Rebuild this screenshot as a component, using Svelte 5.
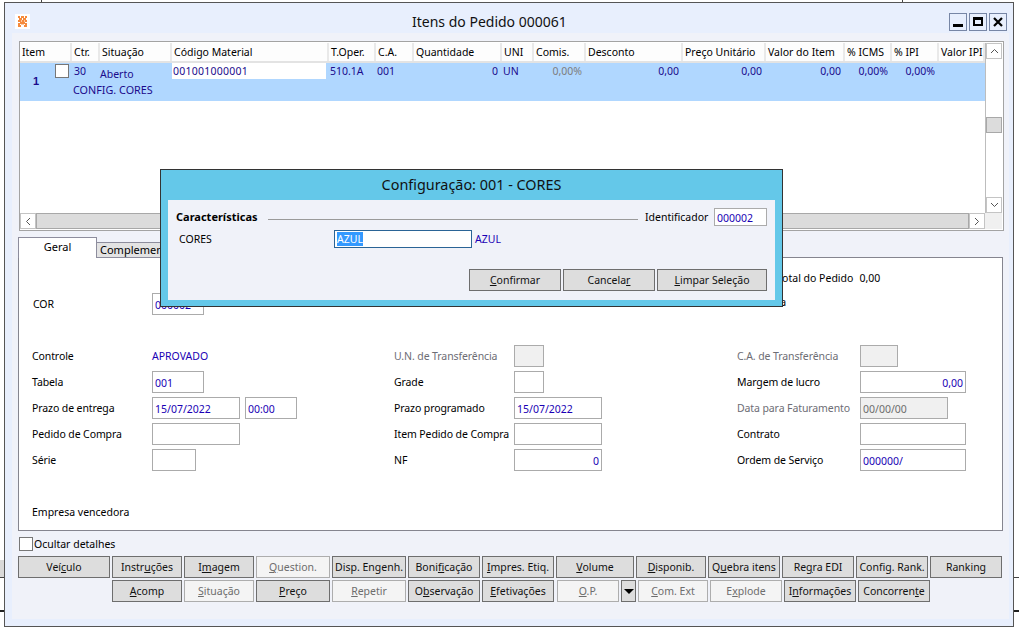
<script>
  const cols = [
    ['Item', 52], ['Ctr.', 28], ['Situação', 72], ['Código Material', 157], ['T.Oper.', 47],
    ['C.A.', 38], ['Quantidade', 88], ['UNI', 32], ['Comis.', 52], ['Desconto', 97],
    ['Preço Unitário', 83], ['Valor do Item', 79], ['% ICMS', 47], ['% IPI', 47], ['Valor IPI', 46]
  ];
  const template = cols.map((c) => c[1] + 'px').join(' ');

  const row1 = [
    ['Veí&culo', 92], ['Instr&uções', 70], ['I&magem', 70], ['&Question.', 74, true],
    ['Disp. Engenh.', 74], ['Boni&ficação', 72], ['&Impres. Etiq.', 72], ['&Volume', 78],
    ['&Disponib.', 70], ['Q&uebra itens', 72], ['Re&gra EDI', 72], ['Config. Rank.', 72], ['Ranking', 72]
  ];
  const row2a = [
    ['&Acomp', 70], ['&Situação', 70, true], ['&Preço', 74], ['&Repetir', 74, true],
    ['O&bservação', 72], ['&Efetivações', 72]
  ];
  const row2b = [
    ['&Com. Ext', 70, true], ['E&xplode', 72, true], ['I&nformações', 72], ['Concorren&te', 72]
  ];
  const dialogButtons = [['&Confirmar', 92], ['Cancela&r', 92], ['&Limpar Seleção', 110]];

  function parts(s) {
    const i = s.indexOf('&');
    if (i < 0) return [s, '', ''];
    return [s.slice(0, i), s.charAt(i + 1), s.slice(i + 2)];
  }
</script>

{#snippet btn(b)}
  {@const p = parts(b[0])}
  <button class="btn" class:off={b[2]} style="width:{b[1]}px">{p[0]}<u>{p[1]}</u>{p[2]}</button>
{/snippet}

<div class="desk">
  <i class="bg v1"></i><i class="bg v2"></i><i class="bg h1"></i><i class="bg h2"></i><i class="bg h3"></i><i class="bg h4"></i><i class="bg h5"></i>

  <section class="window">
    <header class="titlebar">
      <svg class="logo" width="15" height="15" viewBox="0 0 15 15">
        <rect width="15" height="15" fill="#fff"/>
        <path d="M3 2h2v2H3zM6 2h3v2H6zM10 2h2v2h-2zM4 4h3v2H4zM8 4h3v2H8zM3 6h3v2H3zM7 6h2v2H7zM10 6h2v2h-2zM5 8h5v2H5zM3 9h2v2H3zM10 9h2v2h-2zM3 11h3v2H3zM9 11h3v2H9z" fill="#f58a3c"/>
        <path d="M6 6h1v2H6zM9 6h1v2H9zM6 10h3v1H6z" fill="#fbc9a2"/>
      </svg>
      <h1>Itens do Pedido 000061</h1>
      <div class="winbtns">
        <span class="wb"><svg width="16" height="16" viewBox="0 0 16 16"><rect x="3" y="10" width="10" height="3"/></svg></span>
        <span class="wb"><svg width="16" height="16" viewBox="0 0 16 16"><path fill-rule="evenodd" d="M3 3h10v9H3zM5 6v4h6V6z"/></svg></span>
        <span class="wb"><svg width="16" height="16" viewBox="0 0 16 16"><path d="M4 4l8 8M12 4l-8 8" stroke="#000" stroke-width="2.2" fill="none"/></svg></span>
      </div>
    </header>

    <div class="client">
      <div class="gridbox">
        <div class="table">
          <div class="thead" style="grid-template-columns:{template}">
            {#each cols as c}<span class="th">{c[0]}</span>{/each}
          </div>
          <div class="trow" style="grid-template-columns:{template}">
            <div class="c-item"><b>1</b><span class="chk"></span></div>
            <span class="td ctr">30</span>
            <span class="td sit">Aberto</span>
            <span class="td cod">001001000001</span>
            <span class="td">510.1A</span>
            <span class="td">001</span>
            <span class="td r">0</span>
            <span class="td">UN</span>
            <span class="td r gray">0,00%</span>
            <span class="td r">0,00</span>
            <span class="td r">0,00</span>
            <span class="td r">0,00</span>
            <span class="td r">0,00%</span>
            <span class="td r">0,00%</span>
            <span class="td"></span>
            <span class="td cfg">CONFIG. CORES</span>
          </div>
        </div>
        <div class="vbar">
          <span class="sb"><svg width="9" height="6" viewBox="0 0 9 6"><path d="M1 5l3.5-3.5L8 5" fill="none" stroke="#555"/></svg></span>
          <span class="vthumb"></span>
          <span class="sb"><svg width="9" height="6" viewBox="0 0 9 6"><path d="M1 1l3.5 3.5L8 1" fill="none" stroke="#555"/></svg></span>
        </div>
        <div class="hbar">
          <span class="sb"><svg width="6" height="9" viewBox="0 0 6 9"><path d="M5 1L1.5 4.5 5 8" fill="none" stroke="#555"/></svg></span>
          <span class="hthumb"></span>
          <span class="sb"><svg width="6" height="9" viewBox="0 0 6 9"><path d="M1 1l3.500 3.500L1 8" fill="none" stroke="#555"/></svg></span>
        </div>
        <div class="corner"></div>
      </div>

      <div class="tabs">
        <span class="tab active">Geral</span>
        <span class="tab">Complementos</span>
      </div>
      <div class="panel">
        <div class="summary">
          <div class="fr cor"><label>COR</label><span class="inp w52">000002</span></div>
          <div class="totals">
            <div class="total"><span>Total do Pedido</span><span>0,00</span></div>
            <div class="moeda">Moeda</div>
          </div>
        </div>
        <div class="form">
          <div class="col c1">
            <div class="fr"><label>Controle</label><span class="val">APROVADO</span></div>
            <div class="fr"><label>Tabela</label><span class="inp w52">001</span></div>
            <div class="fr"><label>Prazo de entrega</label><span class="inp w88">15/07/2022</span><span class="inp w52 ml">00:00</span></div>
            <div class="fr"><label>Pedido de Compra</label><span class="inp w88"></span></div>
            <div class="fr"><label>Série</label><span class="inp w44"></span></div>
          </div>
          <div class="col c2">
            <div class="fr"><label class="dim">U.N. de Transferência</label><span class="inp w30 dis"></span></div>
            <div class="fr"><label>Grade</label><span class="inp w30"></span></div>
            <div class="fr"><label>Prazo programado</label><span class="inp w88">15/07/2022</span></div>
            <div class="fr"><label>Item Pedido de Compra</label><span class="inp w88"></span></div>
            <div class="fr"><label>NF</label><span class="inp w88 ra">0</span></div>
          </div>
          <div class="col c3">
            <div class="fr"><label class="dim">C.A. de Transferência</label><span class="inp w38 dis"></span></div>
            <div class="fr"><label>Margem de lucro</label><span class="inp w106 ra">0,00</span></div>
            <div class="fr"><label class="dim">Data para Faturamento</label><span class="inp w88 dis distext">00/00/00</span></div>
            <div class="fr"><label>Contrato</label><span class="inp w106"></span></div>
            <div class="fr"><label>Ordem de Serviço</label><span class="inp w106">000000/</span></div>
          </div>
        </div>
        <div class="empresa">Empresa vencedora</div>
      </div>

      <div class="ocultar"><span class="chk"></span><span>Ocultar detalhes</span></div>

      <div class="btnrow">
        {#each row1 as b}{@render btn(b)}{/each}
      </div>
      <div class="btnrow second">
        {#each row2a as b}{@render btn(b)}{/each}
        <button class="btn off op" style="width:62px"><u>O</u>.P.</button>
        <button class="btn arrow" aria-label="Mais"><svg width="10" height="5" viewBox="0 0 10 5"><path d="M0 0h10L5 5z"/></svg></button>
        {#each row2b as b}{@render btn(b)}{/each}
      </div>
    </div>
  </section>

  <section class="dialog">
    <h2>Configuração: 001 - CORES</h2>
    <div class="dbody">
      <div class="dhead">
        <strong>Características</strong>
        <span class="rule"></span>
        <span class="ident">Identificador</span>
        <span class="inp didn">000002</span>
      </div>
      <div class="dline">
        <span class="dlabel">CORES</span>
        <span class="dinput"><mark>AZUL</mark></span>
        <span class="val">AZUL</span>
      </div>
      <div class="dbtns">
        {#each dialogButtons as b}{@render btn(b)}{/each}
      </div>
    </div>
  </section>
</div>

<style>
  :global(body) { margin: 0; background: #fff; }
  .desk {
    position: relative; width: 1019px; height: 627px; overflow: hidden; background: #fff;
    font: 10.5px/14px "Noto Sans", sans-serif; color: #000;
  }
  .bg { position: absolute; display: block; background: #444; }
  .v1 { left: 41px; top: 0; width: 1px; height: 3px; }
  .v2 { left: 902px; top: 0; width: 1px; height: 3px; }
  .h1 { left: 0; top: 560px; width: 4px; height: 17px; background: #d9d9d9; }
  .h2 { left: 0; top: 577px; width: 4px; height: 1px; }
  .h3 { left: 0; top: 610px; width: 4px; height: 2px; background: #222; }
  .h4 { left: 1014px; top: 577px; width: 5px; height: 1px; }
  .h5 { left: 1014px; top: 610px; width: 5px; height: 2px; background: #222; }

  .window {
    position: absolute; left: 4px; top: 2px; width: 1010px; height: 625px; box-sizing: border-box;
    border: 1px solid #555; background: #e8effd; padding: 0 4px 0 7px;
  }
  .titlebar { height: 30px; display: flex; align-items: center; position: relative; }
  .logo { margin: 7px 0 0 3px; flex: none; }
  h1 {
    font-weight: 400; font-size: 14px; line-height: 18px; margin: 7px 0 0 382px; color: #111;
  }
  .winbtns { margin-left: auto; margin-right: 2px; display: flex; gap: 2px; margin-top: 7px; }
  .wb {
    width: 16px; height: 16px; border: 1px solid #7786a5; display: block;
  }
  .wb svg { display: block; }

  .client {
    width: 997px; height: 586px; box-sizing: border-box; background: #f0f2f9; padding: 8px 0 0 6px;
  }
  .gridbox {
    width: 985px; height: 190px; box-sizing: border-box; margin-left: 1px;
    border: 1px solid #a3a3a3; background: #fff; padding: 1px 1px 1px 0;
    display: grid; grid-template-columns: 965px 17px; grid-template-rows: 170px 16px;
  }
  .table { overflow: hidden; background: #fff; }
  .thead { display: grid; height: 20px; box-sizing: border-box; background: #fdfdfd; border-bottom: 2px solid #e3e3e3; }
  .th { padding-left: 2px; border-right: 2px solid #e9e9e9; white-space: nowrap; overflow: hidden; line-height: 19px; }
  .trow {
    display: grid; grid-template-rows: 19px 19px; background: #b0d7ff; color: #1b0a8c;
  }
  .c-item { grid-row: 1 / span 2; position: relative; }
  .c-item b { position: absolute; left: 13px; top: 11px; font-size: 11px; font-family: "Liberation Sans", sans-serif; }
  .chk { display: block; width: 12px; height: 12px; background: #fff; border: 1px solid #777; }
  .c-item .chk { position: absolute; left: 35px; top: 1px; }
  .td { line-height: 17px; padding-left: 1px; white-space: nowrap; }
  .ctr { padding-left: 2px; }
  .sit { padding: 3px 0 0 0; }
  .cod { background: #fff; height: 16px; margin-right: 3px; padding-left: 1px; line-height: 17px; letter-spacing: .25px; }
  .r { text-align: right; padding-right: 4px; }
  .gray { color: #7d7d7d; }
  .cfg { grid-column: 2 / span 3; grid-row: 2; padding-left: 1px; line-height: 15px; font-size: 10.8px; }

  .vbar { grid-column: 2; grid-row: 1 / span 1; display: flex; flex-direction: column; justify-content: space-between; position: relative; height: 170px; border-left: 1px solid #bdbdbd; box-sizing: border-box; }
  .sb { display: flex; align-items: center; justify-content: center; width: 16px; height: 16px; background: #fff; border: 1px solid #c4c4c4; box-sizing: border-box; flex: none; }
  .vthumb { position: absolute; left: 0; top: 74px; width: 16px; height: 16px; box-sizing: border-box; background: #dcdcdc; border: 1px solid #a8a8a8; }
  .hbar { display: flex; align-items: stretch; height: 16px; }
  .hthumb { flex: 1; background: #dcdcdc; border: 1px solid #a8a8a8; box-sizing: border-box; }
  .corner { background: #f0f0f0; }

  .tabs { display: flex; align-items: flex-end; height: 21px; margin-top: 6px; margin-bottom: -1px; position: relative; z-index: 1; }
  .tab { height: 16px; box-sizing: border-box; background: #e3e3e3; border: 1px solid #8d8d9d; border-left: 0; padding: 0 4px 0 3px; width: 120px; line-height: 14px; font-size: 11px; }
  .tab.active { width: 79px; height: 21px; background: #fff; border: 1px solid #8d8d9d; border-bottom: 0; text-align: center; padding: 2px 0 0; }
  .panel {
    width: 985px; height: 274px; box-sizing: border-box; background: #fff; border: 1px solid #85858f; position: relative;
  }
  .summary { height: 87px; display: flex; justify-content: space-between; padding-left: 13px; }
  .fr { display: flex; align-items: center; height: 22px; }
  .fr label { width: 120px; flex: none; white-space: nowrap; letter-spacing: -.1px; }
  .cor { margin-top: 35px; }
  .cor label { padding-left: 1px; width: 119px; }
  .totals { width: 225px; padding-top: 13px; }
  .total { display: flex; gap: 6px; }
  .moeda { margin-top: 10px; margin-left: -25px; }
  .form { display: grid; grid-template-columns: 362px 343px auto; padding-left: 13px; }
  .col { display: flex; flex-direction: column; gap: 4px; }
  .c3 .fr label { width: 123px; }
  .inp {
    display: block; height: 22px; box-sizing: border-box; border: 1px solid #ababab; background: #fff;
    color: #1a00b4; padding: 0 2px; line-height: 22px; overflow: hidden; white-space: nowrap; flex: none;
  }
  .w30 { width: 30px; } .w38 { width: 38px; } .w44 { width: 44px; } .w52 { width: 52px; } .w88 { width: 88px; } .w106 { width: 106px; }
  .ml { margin-left: 5px; }
  .ra { text-align: right; }
  .dis { background: #f0f0f0; }
  .distext { color: #6d6d6d; }
  .dim { color: #6d6d75; }
  .val { color: #1a00b4; }
  .empresa { margin: 34px 0 0 13px; }

  .ocultar { display: flex; align-items: center; gap: 1px; height: 14px; margin-top: 6px; margin-left: 1px; }
  .ocultar .chk { flex: none; }
  .btnrow { display: flex; gap: 2px; margin-top: 5px; }
  .second { margin-top: 2px; margin-left: 94px; }
  .btn {
    height: 22px; box-sizing: border-box; padding: 0; flex: none; border: 1px solid #6e6e6e; background: #dddddd;
    font: inherit; color: #111; white-space: nowrap; overflow: hidden;
  }
  .btn u { text-decoration: underline; }
  .btn.off { background: #f4f4f4; border-color: #adadad; color: #6d6d6d; }
  .op { margin-left: 1px; }
  .arrow { width: 15px; display: flex; align-items: center; justify-content: center; }

  .dialog {
    position: absolute; z-index: 5; left: 160px; top: 169px; width: 623px; height: 138px; box-sizing: border-box;
    border: 1px solid #333; background: #64c8e9; padding: 0 7px;
  }
  h2 { margin: 0; height: 30px; font-weight: 400; font-size: 14.4px; line-height: 30px; text-align: center; color: #111; }
  .dbody { height: 100px; box-sizing: border-box; background: #f0f2f9; padding: 8px 8px 0; }
  .dhead { display: flex; align-items: center; height: 18px; }
  .dhead strong { font-weight: 700; font-size: 11px; width: 92px; flex: none; white-space: nowrap; }
  .rule { width: 370px; height: 1px; background: #9a9a9a; margin: 4px 7px 0 0; flex: none; }
  .ident { width: 69px; flex: none; }
  .didn { width: 53px; height: 18px; line-height: 18px; }
  .dline { display: flex; align-items: center; height: 18px; margin-top: 4px; }
  .dlabel { width: 158px; padding-left: 3px; box-sizing: border-box; }
  .dinput { width: 138px; height: 18px; box-sizing: border-box; border: 1px solid #2a6496; background: #fff; line-height: 16px; padding-left: 2px; margin-right: 3px; }
  mark { background: #3399ff; color: #fff; }
  .dbtns { display: flex; justify-content: flex-end; gap: 2px; margin-top: 21px; }
</style>
